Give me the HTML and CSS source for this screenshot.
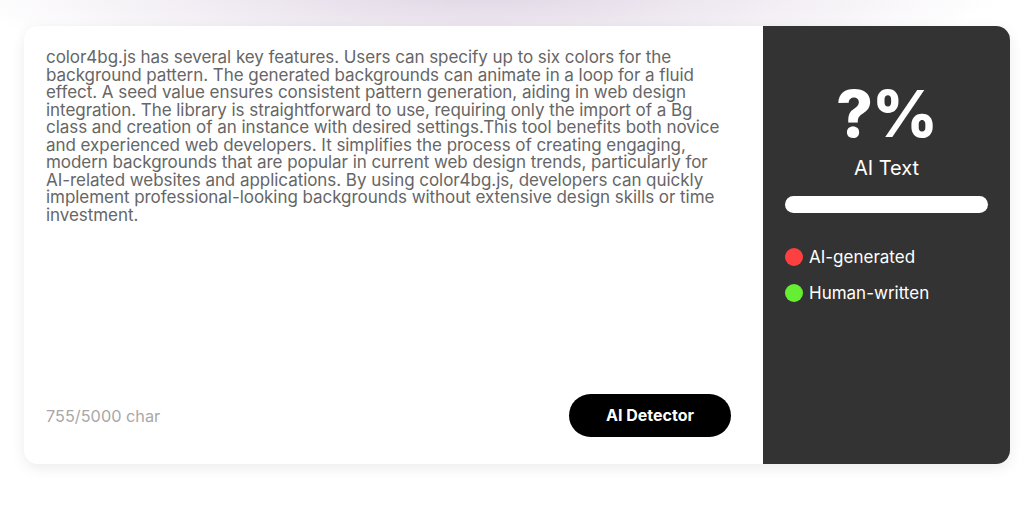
FILE: index.html
```html
<!DOCTYPE html>
<html lang="en">
  <head>
    <meta charset="utf-8" />
    <title>AI Detector</title>
    <link rel="stylesheet" href="styles.css">
  </head>
  <body>
    <main class="page">
      <section class="detector">
        <div class="input-pane">
          <div class="input-text">color4bg.js has several key features. Users can specify up to six colors for the background pattern. The generated backgrounds can animate in a loop for a fluid effect. A seed value ensures consistent pattern generation, aiding in web design integration. The library is straightforward to use, requiring only the import of a Bg class and creation of an instance with desired settings.This tool benefits both novice and experienced web developers. It simplifies the process of creating engaging, modern backgrounds that are popular in current web design trends, particularly for AI-related websites and applications. By using color4bg.js, developers can quickly implement professional-looking backgrounds without extensive design skills or time investment.</div>
          <div class="input-footer">
            <span class="char-count">755/5000 char</span>
            <button class="detect-button">AI Detector</button>
          </div>
        </div>
        <aside class="result-pane">
          <div class="score">?%</div>
          <div class="score-label">AI Text</div>
          <div class="score-bar"></div>
          <ul class="legend">
            <li><span class="dot dot-ai"></span>AI-generated</li>
            <li><span class="dot dot-human"></span>Human-written</li>
          </ul>
        </aside>
      </section>
    </main>
  </body>
</html>
```

FILE: styles.css
```css
* {
  box-sizing: border-box;
}

body {
  margin: 0;
  background: #fff;
  font-family: Inter, "Noto Sans", sans-serif;
}

.page {
  height: 510px;
  padding: 26px 14px 0 24px;
  background:
    radial-gradient(ellipse 520px 90px at 480px -10px, rgba(214, 200, 220, 0.75), rgba(230, 220, 235, 0) 100%),
    linear-gradient(#fff, #fff);
}

.detector {
  display: flex;
  height: 438px;
  border-radius: 14px;
  background: #fff;
  box-shadow: 0 4px 14px rgba(0, 0, 0, 0.08);
  overflow: hidden;
}

.input-pane {
  flex: 1;
  display: flex;
  flex-direction: column;
  justify-content: space-between;
  padding: 23px 24px 27px 22px;
}

.input-text {
  max-width: 686px;
  font-size: 17px;
  line-height: 17.5px;
  color: #666;
  letter-spacing: -0.05px;
}

.input-footer {
  display: flex;
  justify-content: space-between;
  align-items: center;
  padding-right: 8px;
}

.char-count {
  font-size: 16.3px;
  color: #a8a8a8;
}

.detect-button {
  width: 162px;
  height: 43px;
  border: none;
  border-radius: 22px;
  background: #000;
  color: #fff;
  font-family: inherit;
  font-size: 16px;
  font-weight: 700;
  padding-bottom: 3px;
}

.result-pane {
  width: 247px;
  background: #333;
  color: #fff;
  padding: 56px 22px 0 22px;
  display: flex;
  flex-direction: column;
  align-items: center;
}

.score {
  font-size: 64px;
  font-weight: 800;
  line-height: 64px;
  letter-spacing: -1px;
}

.score-label {
  margin-top: 10px;
  font-size: 20px;
}

.score-bar {
  margin-top: 16px;
  width: 100%;
  height: 17px;
  border-radius: 9px;
  background: #fff;
}

.legend {
  align-self: stretch;
  list-style: none;
  margin: 35px 0 0;
  padding: 0;
  font-size: 17px;
}

.legend li {
  display: flex;
  align-items: center;
  gap: 6px;
  height: 18px;
  margin-bottom: 18px;
}

.dot {
  width: 18px;
  height: 18px;
  border-radius: 50%;
}

.dot-ai {
  background: #ff4040;
}

.dot-human {
  background: #66ee33;
}
```
